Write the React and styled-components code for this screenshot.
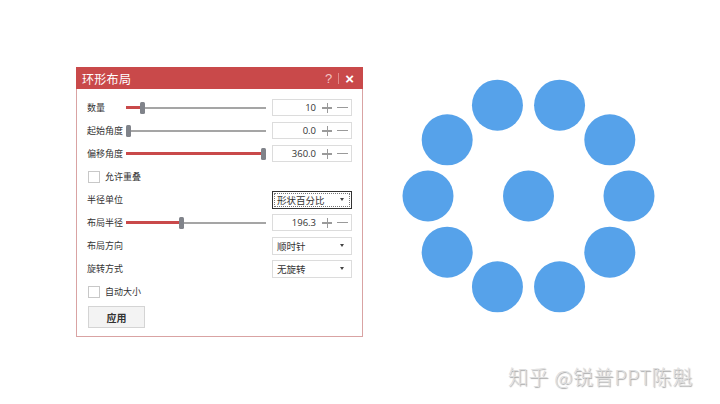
import React from "react"
import styled, { createGlobalStyle } from "styled-components"

const GlobalStyle = createGlobalStyle`
  html, body {
    margin: 0;
    padding: 0;
    background: #ffffff;
  }
  body {
    font-family: "Noto Sans CJK SC", "Noto Sans", sans-serif;
  }
`

const RED = "#c9494a"

const sliders = [
  { label: "数量", value: "10", pos: 0.12 },
  { label: "起始角度", value: "0.0", pos: 0.02 },
  { label: "偏移角度", value: "360.0", pos: 0.985 },
]

const ring = Array.from({ length: 10 }, (_, i) => {
  const a = (i * 36 * Math.PI) / 180
  return { x: 528.5 + 100.5 * Math.cos(a), y: 196 - 95.5 * Math.sin(a) }
})

const SliderRow = ({ label, value, pos }) => (
  <Row>
    <Label>{label}</Label>
    <Track>
      <Fill style={{ width: `${pos * 100}%` }} />
      <Thumb style={{ left: `calc(${pos * 100}% - 3px)` }} />
    </Track>
    <NumberBox>
      <NumberValue>{value}</NumberValue>
      <Plus />
      <Minus />
    </NumberBox>
  </Row>
)

const SelectRow = ({ label, value, focused }) => (
  <Row>
    <Label>{label}</Label>
    <Spacer />
    <Select focused={focused}>
      <span>{value}</span>
      <Caret />
    </Select>
  </Row>
)

const CheckRow = ({ label }) => (
  <Row>
    <Check />
    <CheckLabel>{label}</CheckLabel>
  </Row>
)

const App = () => (
  <>
    <GlobalStyle />
    <Page>
      <Dialog>
        <TitleBar>
          <Title>环形布局</Title>
          <TitleTools>
            <ToolGlyph>?</ToolGlyph>
            <ToolDivider />
            <ToolGlyph close>×</ToolGlyph>
          </TitleTools>
        </TitleBar>
        <Body>
          {sliders.map((s) => (
            <SliderRow key={s.label} {...s} />
          ))}
          <CheckRow label="允许重叠" />
          <SelectRow label="半径单位" value="形状百分比" focused />
          <SliderRow label="布局半径" value="196.3" pos={0.4} />
          <SelectRow label="布局方向" value="顺时针" />
          <SelectRow label="旋转方式" value="无旋转" />
          <CheckRow label="自动大小" />
          <ApplyButton>应用</ApplyButton>
        </Body>
      </Dialog>
      <Canvas width="260" height="250" viewBox="400 70 260 250">
        <circle cx="528.5" cy="196" r="25.5" fill="#56a2ea" />
        {ring.map((c, i) => (
          <circle key={i} cx={c.x} cy={c.y} r="25.5" fill="#56a2ea" />
        ))}
      </Canvas>
      <Watermark>知乎 @锐普PPT陈魁</Watermark>
    </Page>
  </>
)

const Page = styled.div`
  position: relative;
  width: 720px;
  height: 404px;
  box-sizing: border-box;
  padding: 67px 0 0 76px;
  display: flex;
  align-items: flex-start;
  overflow: hidden;
`

const Dialog = styled.div`
  width: 287px;
  height: 270px;
  box-sizing: border-box;
  border: 1px solid #d9a3a3;
  border-top: none;
  background: #fff;
  display: flex;
  flex-direction: column;
`

const TitleBar = styled.div`
  height: 22px;
  margin: 0 -1px;
  background: ${RED};
  display: flex;
  align-items: center;
  justify-content: space-between;
  padding: 0 9px 0 6px;
`

const Title = styled.div`
  color: #fff;
  font-size: 12px;
  letter-spacing: 0.3px;
`

const TitleTools = styled.div`
  display: flex;
  align-items: center;
  gap: 6px;
`

const ToolGlyph = styled.span`
  color: ${(p) => (p.close ? "#ffffff" : "#f2c4c4")};
  font-family: "Liberation Sans", sans-serif;
  font-size: ${(p) => (p.close ? "15px" : "13px")};
  font-weight: ${(p) => (p.close ? "bold" : "normal")};
  line-height: 1;
`

const ToolDivider = styled.span`
  width: 1px;
  height: 11px;
  background: #e08a8a;
`

const Body = styled.div`
  padding: 7px 10px 0 10px;
  display: flex;
  flex-direction: column;
`

const Row = styled.div`
  height: 23px;
  display: flex;
  align-items: center;
`

const Label = styled.div`
  width: 39px;
  font-size: 9px;
  color: #333;
  white-space: nowrap;
`

const Spacer = styled.div`
  flex: 1;
`

const Track = styled.div`
  position: relative;
  width: 141px;
  height: 2px;
  background: #a5a5a5;
  margin-right: 6px;
`

const Fill = styled.div`
  position: absolute;
  left: 0;
  top: -0.5px;
  height: 3px;
  background: ${RED};
`

const Thumb = styled.div`
  position: absolute;
  top: -5px;
  width: 5px;
  height: 12px;
  border-radius: 1.5px;
  background: #80838a;
`

const NumberBox = styled.div`
  width: 80px;
  height: 17px;
  box-sizing: border-box;
  border: 1px solid #dcdcdc;
  display: flex;
  align-items: center;
  justify-content: flex-end;
  padding-right: 2px;
`

const NumberValue = styled.span`
  font-family: "Open Sans", "Liberation Sans", sans-serif;
  font-size: 9.5px;
  color: #333;
  margin-right: 6px;
`

const Plus = styled.span`
  position: relative;
  width: 10px;
  height: 10px;
  margin-right: 5px;

  &::before,
  &::after {
    content: "";
    position: absolute;
    background: #9a9a9a;
  }
  &::before {
    left: 0;
    right: 0;
    top: 4.5px;
    height: 1.5px;
  }
  &::after {
    top: 0;
    bottom: 0;
    left: 4.5px;
    width: 1.5px;
  }
`

const Minus = styled.span`
  width: 11px;
  height: 1.5px;
  background: #9a9a9a;
  margin-right: 1px;
`

const Select = styled.div`
  width: 80px;
  height: 18px;
  box-sizing: border-box;
  border: 1px solid ${(p) => (p.focused ? "#333" : "#dcdcdc")};
  outline: ${(p) => (p.focused ? "1px dotted #777" : "none")};
  outline-offset: -3px;
  display: flex;
  align-items: center;
  justify-content: space-between;
  padding: 0 7px 0 4px;
  font-size: 9.5px;
  color: #333;
`

const Caret = styled.span`
  width: 0;
  height: 0;
  border-left: 2.5px solid transparent;
  border-right: 2.5px solid transparent;
  border-top: 3px solid #444;
`

const Check = styled.div`
  width: 12px;
  height: 12px;
  box-sizing: border-box;
  border: 1px solid #c8c8c8;
  margin-left: 1px;
`

const CheckLabel = styled.span`
  margin-left: 5px;
  font-size: 9px;
  color: #333;
`

const ApplyButton = styled.div`
  width: 57px;
  height: 22px;
  box-sizing: border-box;
  margin: 3px 0 0 1px;
  border: 1px solid #d4d4d4;
  background: #f3f3f3;
  display: flex;
  align-items: center;
  justify-content: center;
  font-size: 10px;
  font-weight: bold;
  color: #333;
`

const Canvas = styled.svg`
  display: block;
  margin: 3px 0 0 37px;
`

const Watermark = styled.div`
  position: absolute;
  left: 508px;
  top: 362px;
  font-size: 20px;
  font-weight: 300;
  color: #dedede;
  text-shadow: 1px 1px 1px #a8a8a8;
  white-space: nowrap;
  letter-spacing: 0.6px;
`

export default App
